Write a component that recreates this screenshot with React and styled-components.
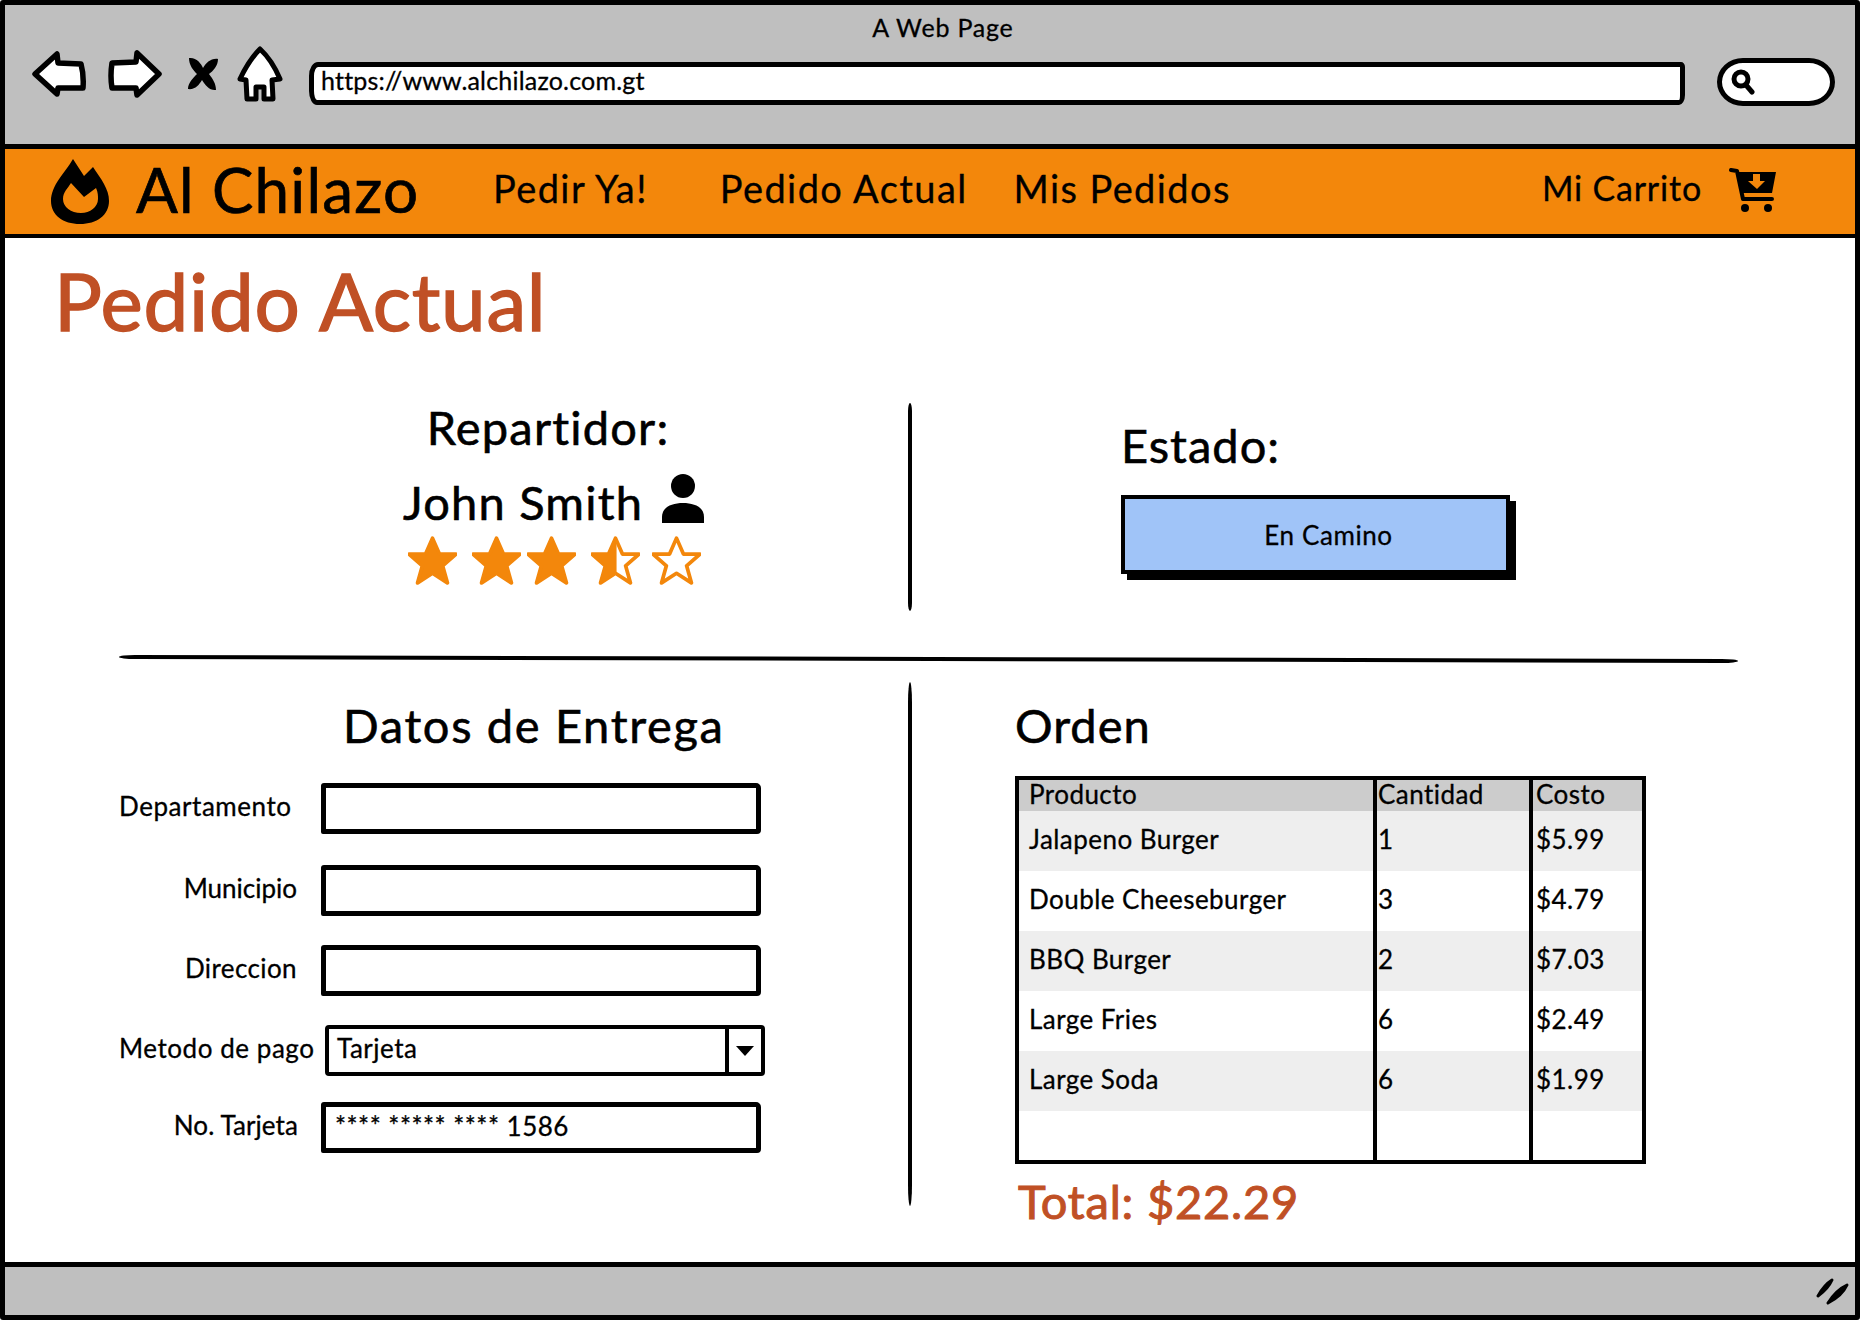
import React from 'react';
import styled, { createGlobalStyle } from 'styled-components';

const GlobalStyle = createGlobalStyle`
  html, body { margin: 0; padding: 0; background: #fff; }
  * { box-sizing: border-box; }
  body {
    font-family: Lato, "Noto Sans", sans-serif;
    color: #000;
    -webkit-text-stroke: 0.3px currentColor;
  }
`;

const Orange = '#f3870b';
const Rust = '#c05025';

const Window = styled.div`
  width: 1860px;
  height: 1320px;
  border: 5px solid #000;
  border-radius: 3px;
  display: flex;
  flex-direction: column;
  background: #fff;
  overflow: hidden;
`;

const Chrome = styled.div`
  height: 139px;
  background: #bfbfbf;
  flex: none;
`;

const PageName = styled.div`
  height: 36px;
  padding: 8px 0 0 26px;
  text-align: center;
  font-size: 25px;
  line-height: 28px;
  letter-spacing: 0.8px;
`;

const Toolbar = styled.div`
  height: 66px;
  display: flex;
  align-items: center;
  padding-left: 27px;
`;

const ToolIcon = styled.svg`
  flex: none;
  margin-left: ${(p) => p.$ml || 0}px;
  display: block;
`;

const UrlBar = styled.div`
  width: 1376px;
  height: 43px;
  margin-left: 26px;
  margin-top: 18px;
  padding-left: 7px;
  background: #fff;
  border: 5px solid #000;
  border-radius: 9px 4px 6px 8px / 14px 5px 10px 14px;
  font-size: 25px;
  line-height: 27px;
  letter-spacing: 0.2px;
`;

const SearchPill = styled.div`
  width: 118px;
  height: 48px;
  margin-left: 32px;
  margin-top: 16px;
  padding-left: 9px;
  display: flex;
  align-items: center;
  background: #fff;
  border: 5px solid #000;
  border-radius: 26px / 24px;
`;

const NavBar = styled.div`
  height: 94px;
  flex: none;
  display: flex;
  align-items: center;
  padding: 0 78px 0 46px;
  background: ${Orange};
  border-top: 5px solid #000;
  border-bottom: 4px solid #000;
`;

const Brand = styled.div`
  margin-left: 27px;
  margin-top: -5px;
  width: 281px;
  font-size: 62px;
  line-height: 70px;
  letter-spacing: 1.2px;
  white-space: nowrap;
  -webkit-text-stroke: 0.7px currentColor;
`;

const NavLink = styled.a`
  margin-left: ${(p) => p.$ml}px;
  margin-top: -8px;
  font-size: 38px;
  line-height: 46px;
  letter-spacing: 1.4px;
  white-space: nowrap;
`;

const CartLink = styled(NavLink)`
  margin-left: auto;
  font-size: 34px;
  letter-spacing: 0.8px;
`;

const CartIcon = styled.svg`
  flex: none;
  margin-left: 27px;
  margin-top: -3px;
`;

const Main = styled.main`
  flex: 1;
  min-height: 0;
  display: flex;
  flex-direction: column;
`;

const PageTitle = styled.h1`
  margin: 22px 0 0 49px;
  font-size: 80px;
  line-height: 80px;
  font-weight: 400;
  letter-spacing: 0.7px;
  color: ${Rust};
  -webkit-text-stroke: 1.4px currentColor;
`;

const TopSection = styled.section`
  margin-top: 63px;
  height: 208px;
  display: grid;
  grid-template-columns: 903px 5px 1fr;
`;

const BottomSection = styled.section`
  margin-top: 21px;
  display: grid;
  grid-template-columns: 903px 5px 1fr;
  align-items: start;
`;

const VerticalRule = styled.div`
  height: ${(p) => p.$h}px;
  width: 4px;
  background: #000;
  border-radius: 50% / 4%;
`;

const HorizontalRule = styled.div`
  margin: 46px 0 0 114px;
  width: 1619px;
  height: 4px;
  background: #000;
  border-radius: 1% / 50%;
  transform: rotate(0.14deg);
  flex: none;
`;

const DriverBlock = styled.div`
  width: 302px;
  margin: -4px 0 0 398px;
  display: flex;
  flex-direction: column;
  align-items: center;
`;

const Heading = styled.h2`
  margin: 0;
  font-size: 47px;
  line-height: 56px;
  font-weight: 400;
  letter-spacing: 1px;
  white-space: nowrap;
  -webkit-text-stroke: 0.6px currentColor;
`;

const DriverHeading = styled(Heading)`
  margin-right: 12px;
  letter-spacing: 1.2px;
`;

const DriverRow = styled.div`
  margin-top: 19px;
  width: 100%;
  height: 50px;
  display: flex;
  align-items: center;
  justify-content: space-between;
  font-size: 47px;
  letter-spacing: 1.2px;
  -webkit-text-stroke: 0.6px currentColor;
`;

const DriverName = styled.span`
  margin-top: 5px;
`;

const StarRow = styled.div`
  margin-top: 12px;
  display: flex;
  gap: 6px;
`;

const StarIcon = styled.svg`
  display: block;
  margin-left: ${(p) => p.$ml || 0}px;
`;

const StatusBlock = styled.div`
  padding: 14px 0 0 208px;
`;

const StatusButton = styled.div`
  margin-top: 22px;
  width: 389px;
  height: 79px;
  padding-left: 26px;
  display: flex;
  align-items: center;
  justify-content: center;
  background: #a0c4f8;
  border: 4px solid #000;
  box-shadow: 6px 6px 0 #000;
  font-size: 26px;
  letter-spacing: 0.6px;
`;

const DeliveryBlock = styled.div`
  padding: 15px 0 0 114px;
`;

const DeliveryHeading = styled(Heading)`
  margin-left: 224px;
  letter-spacing: 1.65px;
`;

const Form = styled.div`
  margin-top: 30px;
  display: flex;
  flex-direction: column;
  gap: 29px;
`;

const FormRow = styled.div`
  display: flex;
  align-items: center;
  height: 51px;
  margin-top: ${(p) => p.$mt || 0}px;
`;

const FieldLabel = styled.div`
  width: 202px;
  flex: none;
  margin-top: -5px;
  padding-right: ${(p) => p.$pad}px;
  text-align: right;
  font-size: 26px;
  letter-spacing: ${(p) => p.$track ?? 0.55}px;
  white-space: nowrap;
`;

const TextField = styled.div`
  width: 440px;
  height: 51px;
  padding: 0 0 4px 9px;
  border: 5px solid #000;
  border-radius: 3px 5px 4px 2px;
  background: #fff;
  display: flex;
  align-items: center;
  font-size: 26px;
  letter-spacing: 0.5px;
`;

const SelectField = styled.div`
  width: 440px;
  height: 51px;
  margin-left: 4px;
  border: 4px solid #000;
  border-radius: 4px;
  display: flex;
  align-items: center;
  font-size: 26px;
  letter-spacing: 0.5px;
`;

const SelectValue = styled.div`
  flex: 1;
  padding: 0 0 6px 8px;
`;

const SelectArrow = styled.div`
  width: 36px;
  height: 100%;
  border-left: 4px solid #000;
  display: flex;
  align-items: center;
  justify-content: center;

  &::after {
    content: '';
    border-left: 9px solid transparent;
    border-right: 9px solid transparent;
    border-top: 10px solid #000;
  }
`;

const OrderBlock = styled.div`
  padding: 15px 0 0 102px;
`;

const OrderTable = styled.table`
  margin-top: 23px;
  width: 631px;
  height: 388px;
  border: 4px solid #000;
  border-collapse: separate;
  border-spacing: 0;
  table-layout: fixed;
  font-size: 26px;
  letter-spacing: 0.45px;
`;

const HeadCell = styled.th`
  height: 31px;
  padding: 0 0 3px ${(p) => p.$pad ?? 1}px;
  background: #ccc;
  font-weight: 400;
  text-align: left;
  line-height: 28px;
  border-right: ${(p) => (p.$last ? 0 : '4px solid #000')};
`;

const Cell = styled.td`
  height: ${(p) => (p.$blank ? 49 : 60)}px;
  padding: 0 0 4px ${(p) => p.$pad ?? 1}px;
  background: ${(p) => (p.$shaded ? '#eee' : '#fff')};
  border-right: ${(p) => (p.$last ? 0 : '4px solid #000')};
`;

const TotalLine = styled.div`
  margin: 9px 0 0 3px;
  font-size: 47px;
  line-height: 56px;
  letter-spacing: 0.8px;
  color: ${Rust};
  -webkit-text-stroke: 1px currentColor;
`;

const StatusFooter = styled.div`
  height: 53px;
  flex: none;
  background: #bfbfbf;
  border-top: 5px solid #000;
  display: flex;
  align-items: center;
  justify-content: flex-end;
  padding-right: 4px;
`;

const orders = [
  ['Jalapeno Burger', '1', '$5.99'],
  ['Double Cheeseburger', '3', '$4.79'],
  ['BBQ Burger', '2', '$7.03'],
  ['Large Fries', '6', '$2.49'],
  ['Large Soda', '6', '$1.99'],
];

const STAR = 'M24 3 L30.5 18 L46 18 L33.5 29 L38 45 L24 36 L10 45 L14.5 29 L2 18 L17.5 18 Z';
const LEFT_HALF = 'M24 3 L24 36 L10 45 L14.5 29 L2 18 L17.5 18 Z';

function Star({ kind, ml }) {
  return (
    <StarIcon width="49" height="49" viewBox="1 1 46 46" $ml={ml}>
      <path
        d={STAR}
        fill={kind === 'full' ? Orange : '#fff'}
        stroke={Orange}
        strokeWidth="3.5"
        strokeLinejoin="round"
      />
      {kind === 'half' && (
        <path d={LEFT_HALF} fill={Orange} stroke={Orange} strokeWidth="2" strokeLinejoin="round" />
      )}
    </StarIcon>
  );
}

export default function App() {
  return (
    <>
      <GlobalStyle />
      <Window>
        <Chrome>
          <PageName>A Web Page</PageName>
          <Toolbar>
            <ToolIcon width="55" height="46" viewBox="0 0 55 46">
              <path
                d="M3 23 L25 3 L26 12 L49 13 Q52 24 51 37 L26 37 L25 43 Z"
                fill="#fff" stroke="#000" strokeWidth="5.5" strokeLinejoin="round"
              />
            </ToolIcon>
            <ToolIcon width="55" height="48" viewBox="0 0 55 48" $ml={20}>
              <path
                d="M52 24 L30 3 L29 12 L5 13 Q3 26 5 38 L29 38 L30 45 Z"
                fill="#fff" stroke="#000" strokeWidth="5.5" strokeLinejoin="round"
              />
            </ToolIcon>
            <ToolIcon width="32" height="34" viewBox="0 0 32 34" $ml={25}>
              <path
                d="M2 1 C9 0 14 6 16 11 C19 6 24 1 31 2 C31 9 26 14 22 17 C26 22 29 27 29 33 C23 34 18 28 15 23 C12 28 8 33 1 32 C1 26 6 21 10 17 C6 13 2 8 2 1 Z"
                fill="#000"
              />
            </ToolIcon>
            <ToolIcon width="46" height="56" viewBox="0 0 46 56" $ml={18}>
              <path
                d="M23 3 Q35 14 43 33 L35 34 L36 53 L27 53 L27 41 L19 41 L19 53 L10 53 L9 34 L3 33 Q12 14 23 3 Z"
                fill="#fff" stroke="#000" strokeWidth="5" strokeLinejoin="round"
              />
            </ToolIcon>
            <UrlBar>https://www.alchilazo.com.gt</UrlBar>
            <SearchPill>
              <svg width="24" height="26" viewBox="0 0 24 26">
                <circle cx="10" cy="10" r="7" fill="none" stroke="#000" strokeWidth="5" />
                <path d="M15 16 L21 23" stroke="#000" strokeWidth="5" strokeLinecap="round" />
              </svg>
            </SearchPill>
          </Toolbar>
        </Chrome>

        <NavBar>
          <svg width="58" height="65" viewBox="0 0 58 65">
            <path
              fillRule="evenodd"
              fill="#000"
              d="M22 0 L33 17 L42 8 C50 20 58 30 58 42 C58 56 46 65 29 65 C12 65 0 56 0 42 C0 26 14 14 22 0 Z M20 24 L33 38 L45 29 C47 33 47 37 47 40 C47 48 39 54 30 54 C20 54 12 48 12 40 C12 33 17 29 20 24 Z"
            />
          </svg>
          <Brand>Al Chilazo</Brand>
          <NavLink $ml={76}>Pedir Ya!</NavLink>
          <NavLink $ml={72}>Pedido Actual</NavLink>
          <NavLink $ml={46}>Mis Pedidos</NavLink>
          <CartLink>Mi Carrito</CartLink>
          <CartIcon width="48" height="44" viewBox="0 0 48 44">
            <path d="M2 2 L8 3 L14 31 L43 31" fill="none" stroke="#000" strokeWidth="4" strokeLinecap="round" strokeLinejoin="round" />
            <path fillRule="evenodd" fill="#000" d="M9 4 L47 4 L43 25 L13 25 Z M24 6 L24 13 L19 13 L28 21 L36 13 L31 13 L31 6 Z" />
            <circle cx="16" cy="40" r="4" fill="#000" />
            <circle cx="39" cy="40" r="4" fill="#000" />
          </CartIcon>
        </NavBar>

        <Main>
          <PageTitle>Pedido Actual</PageTitle>

          <TopSection>
            <DriverBlock>
              <DriverHeading>Repartidor:</DriverHeading>
              <DriverRow>
                <DriverName>John Smith</DriverName>
                <svg width="44" height="50" viewBox="0 0 44 50">
                  <circle cx="22" cy="12" r="12" fill="#000" />
                  <path d="M1 49 V43 C1 33 11 29 22 29 C33 29 43 33 43 43 V49 Z" fill="#000" />
                </svg>
              </DriverRow>
              <StarRow>
                <Star kind="full" />
                <Star kind="full" ml={9} />
                <Star kind="full" />
                <Star kind="half" ml={9} />
                <Star kind="empty" ml={6} />
              </StarRow>
            </DriverBlock>
            <VerticalRule $h={208} />
            <StatusBlock>
              <Heading>Estado:</Heading>
              <StatusButton>En Camino</StatusButton>
            </StatusBlock>
          </TopSection>

          <HorizontalRule />

          <BottomSection>
            <DeliveryBlock>
              <DeliveryHeading>Datos de Entrega</DeliveryHeading>
              <Form>
                <FormRow>
                  <FieldLabel $pad={33}>Departamento</FieldLabel>
                  <TextField />
                </FormRow>
                <FormRow $mt={2}>
                  <FieldLabel $pad={24} $track={0}>Municipio</FieldLabel>
                  <TextField />
                </FormRow>
                <FormRow>
                  <FieldLabel $pad={24} $track={0.4}>Direccion</FieldLabel>
                  <TextField />
                </FormRow>
                <FormRow>
                  <FieldLabel $pad={7}>Metodo de pago</FieldLabel>
                  <SelectField>
                    <SelectValue>Tarjeta</SelectValue>
                    <SelectArrow />
                  </SelectField>
                </FormRow>
                <FormRow $mt={-3}>
                  <FieldLabel $pad={23} $track={0.1}>No. Tarjeta</FieldLabel>
                  <TextField>**** ***** **** 1586</TextField>
                </FormRow>
              </Form>
            </DeliveryBlock>
            <VerticalRule $h={524} />
            <OrderBlock>
              <Heading>Orden</Heading>
              <OrderTable>
                <colgroup>
                  <col width="358" />
                  <col width="156" />
                  <col />
                </colgroup>
                <thead>
                  <tr>
                    <HeadCell $pad={10}>Producto</HeadCell>
                    <HeadCell>Cantidad</HeadCell>
                    <HeadCell $last $pad={3}>Costo</HeadCell>
                  </tr>
                </thead>
                <tbody>
                  {orders.map((row, i) => (
                    <tr key={row[0]}>
                      <Cell $pad={10} $shaded={i % 2 === 0}>{row[0]}</Cell>
                      <Cell $shaded={i % 2 === 0}>{row[1]}</Cell>
                      <Cell $last $pad={3} $shaded={i % 2 === 0}>{row[2]}</Cell>
                    </tr>
                  ))}
                  <tr>
                    <Cell $blank />
                    <Cell $blank />
                    <Cell $blank $last />
                  </tr>
                </tbody>
              </OrderTable>
              <TotalLine>Total: $22.29</TotalLine>
            </OrderBlock>
          </BottomSection>
        </Main>

        <StatusFooter>
          <svg width="36" height="28" viewBox="0 0 36 28">
            <path d="M3 19 Q9 8 17 3 Q13 12 3 19 Z M13 26 Q21 13 32 8 Q27 19 13 26 Z" fill="#000" stroke="#000" strokeWidth="3" strokeLinejoin="round" />
          </svg>
        </StatusFooter>
      </Window>
    </>
  );
}
